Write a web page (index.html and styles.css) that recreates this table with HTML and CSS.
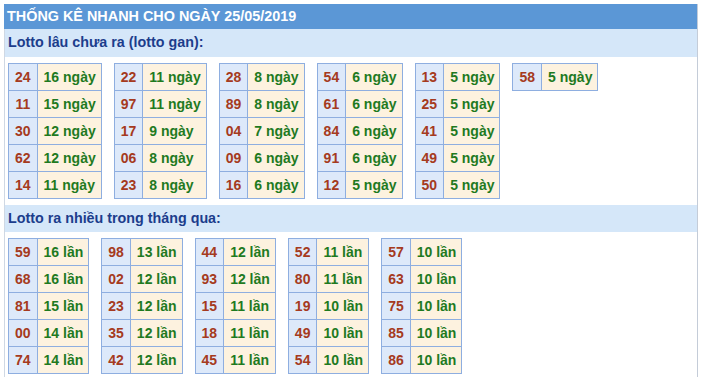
FILE: index.html
```html
<!DOCTYPE html>
<html lang="vi">
<head>
<meta charset="utf-8">
<title>Thống kê nhanh</title>
<link rel="stylesheet" href="styles.css">
</head>
<body>
<div class="box">
  <div class="head">THỐNG KÊ NHANH CHO NGÀY 25/05/2019</div>
  <div class="sub">Lotto lâu chưa ra (lotto gan):</div>
  <div class="tables">
    <table><tr><td class="n">24</td><td class="v">16 ngày</td></tr><tr><td class="n">11</td><td class="v">15 ngày</td></tr><tr><td class="n">30</td><td class="v">12 ngày</td></tr><tr><td class="n">62</td><td class="v">12 ngày</td></tr><tr><td class="n">14</td><td class="v">11 ngày</td></tr></table>
    <table><tr><td class="n">22</td><td class="v">11 ngày</td></tr><tr><td class="n">97</td><td class="v">11 ngày</td></tr><tr><td class="n">17</td><td class="v">9 ngày</td></tr><tr><td class="n">06</td><td class="v">8 ngày</td></tr><tr><td class="n">23</td><td class="v">8 ngày</td></tr></table>
    <table><tr><td class="n">28</td><td class="v">8 ngày</td></tr><tr><td class="n">89</td><td class="v">8 ngày</td></tr><tr><td class="n">04</td><td class="v">7 ngày</td></tr><tr><td class="n">09</td><td class="v">6 ngày</td></tr><tr><td class="n">16</td><td class="v">6 ngày</td></tr></table>
    <table><tr><td class="n">54</td><td class="v">6 ngày</td></tr><tr><td class="n">61</td><td class="v">6 ngày</td></tr><tr><td class="n">84</td><td class="v">6 ngày</td></tr><tr><td class="n">91</td><td class="v">6 ngày</td></tr><tr><td class="n">12</td><td class="v">5 ngày</td></tr></table>
    <table><tr><td class="n">13</td><td class="v">5 ngày</td></tr><tr><td class="n">25</td><td class="v">5 ngày</td></tr><tr><td class="n">41</td><td class="v">5 ngày</td></tr><tr><td class="n">49</td><td class="v">5 ngày</td></tr><tr><td class="n">50</td><td class="v">5 ngày</td></tr></table>
    <table><tr><td class="n">58</td><td class="v">5 ngày</td></tr></table>
  </div>
  <div class="sub sub2">Lotto ra nhiều trong tháng qua:</div>
  <div class="tables last">
    <table><tr><td class="n">59</td><td class="v">16 lần</td></tr><tr><td class="n">68</td><td class="v">16 lần</td></tr><tr><td class="n">81</td><td class="v">15 lần</td></tr><tr><td class="n">00</td><td class="v">14 lần</td></tr><tr><td class="n">74</td><td class="v">14 lần</td></tr></table>
    <table><tr><td class="n">98</td><td class="v">13 lần</td></tr><tr><td class="n">02</td><td class="v">12 lần</td></tr><tr><td class="n">23</td><td class="v">12 lần</td></tr><tr><td class="n">35</td><td class="v">12 lần</td></tr><tr><td class="n">42</td><td class="v">12 lần</td></tr></table>
    <table><tr><td class="n">44</td><td class="v">12 lần</td></tr><tr><td class="n">93</td><td class="v">12 lần</td></tr><tr><td class="n">15</td><td class="v">11 lần</td></tr><tr><td class="n">18</td><td class="v">11 lần</td></tr><tr><td class="n">45</td><td class="v">11 lần</td></tr></table>
    <table><tr><td class="n">52</td><td class="v">11 lần</td></tr><tr><td class="n">80</td><td class="v">11 lần</td></tr><tr><td class="n">19</td><td class="v">10 lần</td></tr><tr><td class="n">49</td><td class="v">10 lần</td></tr><tr><td class="n">54</td><td class="v">10 lần</td></tr></table>
    <table><tr><td class="n">57</td><td class="v">10 lần</td></tr><tr><td class="n">63</td><td class="v">10 lần</td></tr><tr><td class="n">75</td><td class="v">10 lần</td></tr><tr><td class="n">85</td><td class="v">10 lần</td></tr><tr><td class="n">86</td><td class="v">10 lần</td></tr></table>
  </div>
</div>
</body>
</html>
```

FILE: styles.css
```css
html, body {
  margin: 0;
  padding: 0;
  background: #fff;
}
body {
  padding: 4px 0 0 4px;
  font-family: "Liberation Sans", Arial, sans-serif;
  font-size: 14px;
  font-weight: bold;
}
.box {
  width: 692px;
  border-left: 1px solid #cfd8e4;
  border-right: 1px solid #c4ccd8;
  min-height: 373px;
}
.head {
  background: #5b97d6;
  color: #fff;
  height: 25px;
  line-height: 25px;
  padding-left: 3px;
  margin-left: -1px;
  font-size: 14.4px;
}
.sub {
  background: #d5e7f9;
  color: #1c3d8c;
  height: 28px;
  line-height: 27px;
  padding-left: 3px;
  font-size: 14.3px;
}
.sub2 {
  height: 27px;
  line-height: 26px;
}
.tables {
  display: flex;
  align-items: flex-start;
  gap: 12px;
  padding: 6px 0 6px 3px;
}
.tables.last {
  padding-bottom: 3px;
}
table {
  border-collapse: collapse;
}
td {
  border: 1px solid #8eaee0;
  line-height: 16px;
  white-space: nowrap;
}
td.n {
  background: #dde9fa;
  color: #a53a20;
  text-align: center;
  padding: 5px 6px;
}
td.v {
  background: #fdf2df;
  color: #1f7a1f;
  padding: 5px 5px 5px 6px;
}
```
